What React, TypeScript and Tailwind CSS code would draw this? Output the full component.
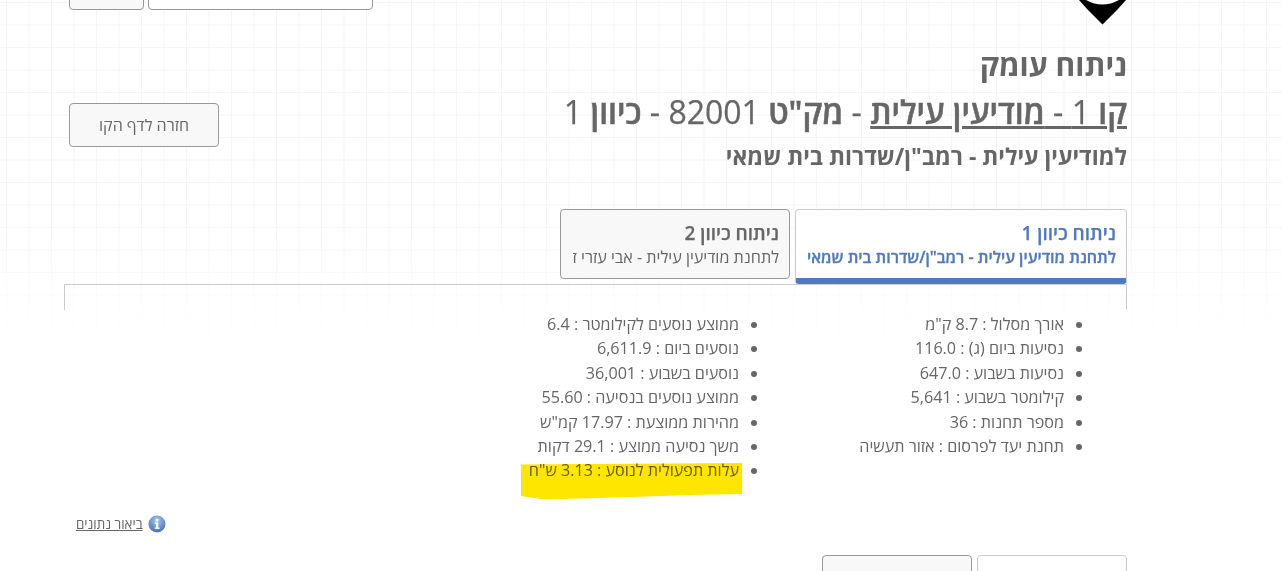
import React from 'react';

const leftStats = [
  'אורך מסלול : 8.7 ק"מ',
  'נסיעות ביום (ג) : 116.0',
  'נסיעות בשבוע : 647.0',
  'קילומטר בשבוע : 5,641',
  'מספר תחנות : 36',
  'תחנת יעד לפרסום : אזור תעשיה',
];

const rightStats = [
  'ממוצע נוסעים לקילומטר : 6.4',
  'נוסעים ביום : 6,611.9',
  'נוסעים בשבוע : 36,001',
  'ממוצע נוסעים בנסיעה : 55.60',
  'מהירות ממוצעת : 17.97 קמ"ש',
  'משך נסיעה ממוצע : 29.1 דקות',
  'עלות תפעולית לנוסע : 3.13 ש"ח',
];

function StatList({ items, highlightLast }: { items: string[]; highlightLast?: boolean }) {
  return (
    <ul className="w-[325px] shrink-0 list-disc pr-[63px] text-[16.15px] leading-[24.4px] text-[#666]">
      {items.map((item, i) => (
        <li key={item} className="relative">
          {item}
          {highlightLast && i === items.length - 1 && (
            <svg
              className="absolute right-[-3px] top-[5px] mix-blend-multiply"
              width="221"
              height="36"
              viewBox="0 0 221 36"
            >
              <path d="M0 1.5 L221 0 L221 31 L170 32 L110 34 L40 36 L20 36 L0 33 Z" fill="#ffe600" />
            </svg>
          )}
        </li>
      ))}
    </ul>
  );
}

export default function App() {
  return (
    <div
      dir="rtl"
      className="relative h-[571px] w-[1282px] overflow-hidden bg-white font-['Open_Sans',sans-serif] text-[#666]"
    >
      {/* faint grid behind the page, fades out towards the list */}
      <div className="absolute inset-x-0 top-0 h-[345px] bg-[linear-gradient(#f5f5f5_1px,transparent_1px),linear-gradient(90deg,#f5f5f5_1px,transparent_1px)] bg-[size:22.5px_22.5px] bg-[position:6px_2px]" />
      <div className="absolute inset-x-0 top-[220px] h-[125px] bg-gradient-to-b from-transparent to-white" />

      <div className="relative mr-[155px] w-[1063px]">
        {/* top row, cut by the window */}
        <div className="flex h-[44px] justify-between pl-[5px]">
          <svg className="mr-[1px]" width="47" height="25" viewBox="0 0 47 25">
            <path d="M0 0 L9 10 L23.5 24.5 L38 10 L47 0 Z" fill="#000" />
            <path d="M7 0 Q23.5 9 40 0 Z" fill="#fff" />
          </svg>
          <div dir="ltr" className="mt-[-30px] flex h-[40px] gap-1">
            <div className="w-[75px] rounded border border-[#999] bg-[#f8f8f8]" />
            <div className="w-[225px] rounded border border-[#999] bg-white" />
          </div>
        </div>

        {/* titles and back button */}
        <div className="flex items-start justify-between pl-[5px]">
          <div>
            <h1 className="text-[30px] font-bold leading-[41px]">ניתוח עומק</h1>
            <h2 className="mt-[4px] text-[32px] font-semibold leading-[45px] [-webkit-text-stroke:0.5px_#666]">
              <span className="underline">
                קו <span className="font-normal [-webkit-text-stroke:0.25px_#666]">1 - </span>מודיעין עילית
              </span>
              <span className="font-normal [-webkit-text-stroke:0.25px_#666]"> - </span>מק"ט
              <span className="font-normal [-webkit-text-stroke:0.25px_#666]"> 82001 - </span>כיוון
              <span className="font-normal [-webkit-text-stroke:0.25px_#666]"> 1</span>
            </h2>
            <h3 className="mt-[7px] text-[22.95px] font-bold leading-[30px]">למודיעין עילית - רמב"ן/שדרות בית שמאי</h3>
          </div>
          <button className="mt-[59px] h-[44px] w-[150px] rounded border border-[#999] bg-[#f8f8f8] text-[16px] text-[#666]">
            חזרה לדף הקו
          </button>
        </div>

        {/* direction tabs */}
        <div className="mt-[38px] flex items-start gap-[5px]">
          <div className="h-[75px] w-[332px] rounded border border-b-[6px] border-[#ccc] border-b-[#5079c0] bg-white px-[10px] pt-[10px] text-[#5079c0]">
            <div className="text-[19px] font-semibold leading-[27px] [-webkit-text-stroke:0.25px_#5079c0]">ניתוח כיוון 1</div>
            <div className="mt-[-1px] whitespace-nowrap text-[16px] font-semibold leading-[22px] [-webkit-text-stroke:0.3px_#5079c0]">
              לתחנת מודיעין עילית - רמב"ן/שדרות בית שמאי
            </div>
          </div>
          <div className="h-[70px] w-[230px] rounded border border-[#999] bg-[#f8f8f8] px-[10px] pt-[10px]">
            <div className="text-[19px] font-semibold leading-[27px] [-webkit-text-stroke:0.25px_#666]">ניתוח כיוון 2</div>
            <div className="mt-[-1px] whitespace-nowrap text-[16.15px] leading-[22px]">לתחנת מודיעין עילית - אבי עזרי ז</div>
          </div>
        </div>

        {/* panel top edge */}
        <div className="h-[26px] w-[1063px] border-x border-t border-[#ccc]" />

        {/* stats */}
        <div className="flex pt-[2px]">
          <StatList items={leftStats} />
          <StatList items={rightStats} highlightLast />
        </div>

        {/* data legend link */}
        <div dir="ltr" className="mt-[32px] flex items-center gap-[5px] pl-[12px]">
          <span dir="rtl" className="text-[13.4px] leading-[19px] underline">ביאור נתונים</span>
          <svg width="18" height="18" viewBox="0 0 18 18">
            <defs>
              <radialGradient id="infoFill" cx="50%" cy="30%" r="70%">
                <stop offset="0%" stopColor="#a9c4ee" />
                <stop offset="100%" stopColor="#4470bd" />
              </radialGradient>
            </defs>
            <circle cx="9" cy="9" r="8.5" fill="url(#infoFill)" />
            <circle cx="9" cy="5" r="1.6" fill="#fff" />
            <path d="M6.8 7.5 H10.3 V12.6 H11.5 V14 H6.8 V12.6 H8 V8.9 H6.8 Z" fill="#fff" />
          </svg>
        </div>

        {/* bottom tabs, cut by the window */}
        <div className="mt-[21px] flex gap-[5px]">
          <div className="h-[40px] w-[150px] rounded border border-[#ccc] bg-white" />
          <div className="h-[40px] w-[150px] rounded border border-[#999] bg-[#f8f8f8]" />
        </div>
      </div>
    </div>
  );
}
